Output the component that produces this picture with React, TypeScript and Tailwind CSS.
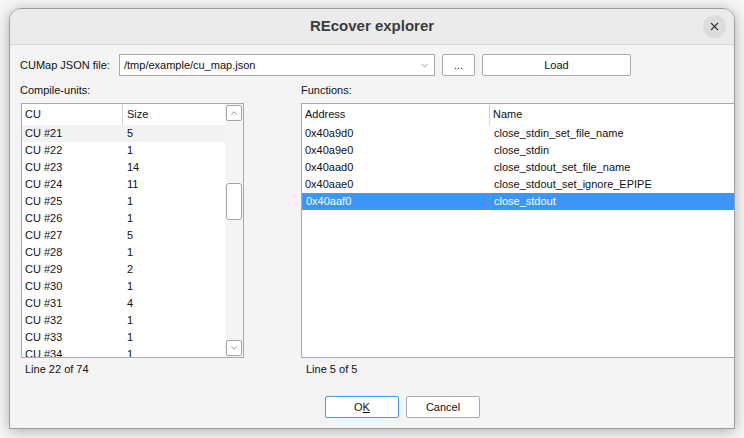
import { ChevronDown, ChevronUp, X } from "lucide-react";

const units = [
  ["CU #21", "5"],
  ["CU #22", "1"],
  ["CU #23", "14"],
  ["CU #24", "11"],
  ["CU #25", "1"],
  ["CU #26", "1"],
  ["CU #27", "5"],
  ["CU #28", "1"],
  ["CU #29", "2"],
  ["CU #30", "1"],
  ["CU #31", "4"],
  ["CU #32", "1"],
  ["CU #33", "1"],
  ["CU #34", "1"],
];

const functions = [
  ["0x40a9d0", "close_stdin_set_file_name"],
  ["0x40a9e0", "close_stdin"],
  ["0x40aad0", "close_stdout_set_file_name"],
  ["0x40aae0", "close_stdout_set_ignore_EPIPE"],
  ["0x40aaf0", "close_stdout"],
];

function Button({ children, wide, focus }: { children: React.ReactNode; wide?: boolean; focus?: boolean }) {
  return (
    <div
      className={`flex h-[22px] items-center justify-center rounded-[2px] border bg-white ${
        focus ? "border-[#4a9af0]" : "border-[#ababab]"
      } ${wide ? "w-[149px]" : "w-[33px]"}`}
    >
      {children}
    </div>
  );
}

export default function App() {
  return (
    <div
      className="h-[438px] w-[744px] overflow-hidden bg-[#f6f6f6] text-[11px] text-[#111]"
      style={{ fontFamily: '"Liberation Sans", Arial, sans-serif' }}
    >
      <div className="ml-[9px] mt-[8px] flex h-[421px] w-[726px] flex-col overflow-hidden rounded-t-[12px] border border-[#9c9c9c] bg-[#f4f4f4] shadow-[0_2px_14px_rgba(0,0,0,0.3)]">
        {/* Title bar */}
        <div className="relative flex h-[36px] shrink-0 items-center justify-center border-b border-[#d4d4d4] bg-[#ebebeb]">
          <span className="text-[15px] font-bold text-[#3c3c3c]">REcover explorer</span>
          <div className="absolute right-[8px] top-[6px] flex h-[23px] w-[23px] items-center justify-center rounded-full bg-[#dcdcdc]">
            <X size={13} strokeWidth={2} className="text-[#333]" />
          </div>
        </div>

        {/* File row */}
        <div className="mt-[9px] flex h-[22px] items-center pl-[10px]">
          <span className="w-[99px]">CUMap JSON file:</span>
          <div className="flex h-[22px] w-[316px] items-center justify-between border border-[#a9a9a9] bg-white pl-[4px] pr-[4px]">
            <span>/tmp/example/cu_map.json</span>
            <ChevronDown size={11} strokeWidth={1.5} className="text-[#666]" />
          </div>
          <div className="ml-[7px]">
            <Button>...</Button>
          </div>
          <div className="ml-[7px]">
            <Button wide>Load</Button>
          </div>
        </div>

        {/* Panes */}
        <div className="mt-[6px] flex">
          <div className="ml-[10px] flex w-[224px] flex-col">
            <div className="h-[16px] leading-[16px]">Compile-units:</div>
            <div className="ml-[1px] mt-[5px] flex h-[255px] w-[223px] border border-[#a9a9a9] bg-white">
              <div className="flex-1 overflow-hidden">
                <div className="flex h-[21px] items-center">
                  <div className="flex h-full w-[101px] items-center border-r border-[#d2d2d2] pl-[3px]">CU</div>
                  <div className="pl-[4px]">Size</div>
                </div>
                {units.map(([cu, size], i) => (
                  <div key={cu} className={`flex h-[17px] items-center ${i === 0 ? "bg-[#f3f3f3]" : ""}`}>
                    <div className="w-[101px] pl-[3px]">{cu}</div>
                    <div className="pl-[4px]">{size}</div>
                  </div>
                ))}
              </div>
              <div className="flex w-[18px] flex-col items-center bg-[#f4f4f4] pt-[1px] pb-[1px]">
                <div className="flex h-[16px] w-[16px] items-center justify-center rounded-[2px] border border-[#a4a4a4] bg-white">
                  <ChevronUp size={10} strokeWidth={1.5} className="text-[#555]" />
                </div>
                <div className="mt-[62px] h-[37px] w-[16px] rounded-[3px] border border-[#a4a4a4] bg-white" />
                <div className="flex-1" />
                <div className="flex h-[16px] w-[16px] items-center justify-center rounded-[2px] border border-[#a4a4a4] bg-white">
                  <ChevronDown size={10} strokeWidth={1.5} className="text-[#555]" />
                </div>
              </div>
            </div>
            <div className="mt-[3px] pl-[5px] leading-[16px]">Line 22 of 74</div>
          </div>

          <div className="ml-[57px] flex w-[470px] shrink-0 flex-col">
            <div className="h-[16px] leading-[16px]">Functions:</div>
            <div className="mt-[5px] h-[255px] border border-[#a9a9a9] bg-white">
              <div className="flex h-[21px] items-center">
                <div className="flex h-full w-[188px] items-center border-r border-[#d2d2d2] pl-[3px]">Address</div>
                <div className="pl-[3px]">Name</div>
              </div>
              {functions.map(([addr, name], i) => {
                const sel = i === functions.length - 1;
                return (
                  <div
                    key={addr}
                    className={`flex h-[17px] items-center ${sel ? "bg-[#3d96f5] text-white" : ""}`}
                  >
                    <div
                      className={`flex h-full w-[189px] items-center pl-[3px] ${
                        sel ? "border border-dotted border-[#c8853c] pl-[2px]" : ""
                      }`}
                    >
                      {addr}
                    </div>
                    <div className="pl-[3px]">{name}</div>
                  </div>
                );
              })}
            </div>
            <div className="mt-[3px] pl-[5px] leading-[16px]">Line 5 of 5</div>
          </div>
        </div>

        {/* Dialog buttons */}
        <div className="mt-[19px] flex gap-[7px] pl-[315px]">
          <div className="flex h-[22px] w-[74px] items-center justify-center rounded-[2px] border border-[#4a9af0] bg-white">
            O<span className="underline">K</span>
          </div>
          <div className="flex h-[22px] w-[74px] items-center justify-center rounded-[2px] border border-[#ababab] bg-white">
            Cancel
          </div>
        </div>
      </div>
    </div>
  );
}
